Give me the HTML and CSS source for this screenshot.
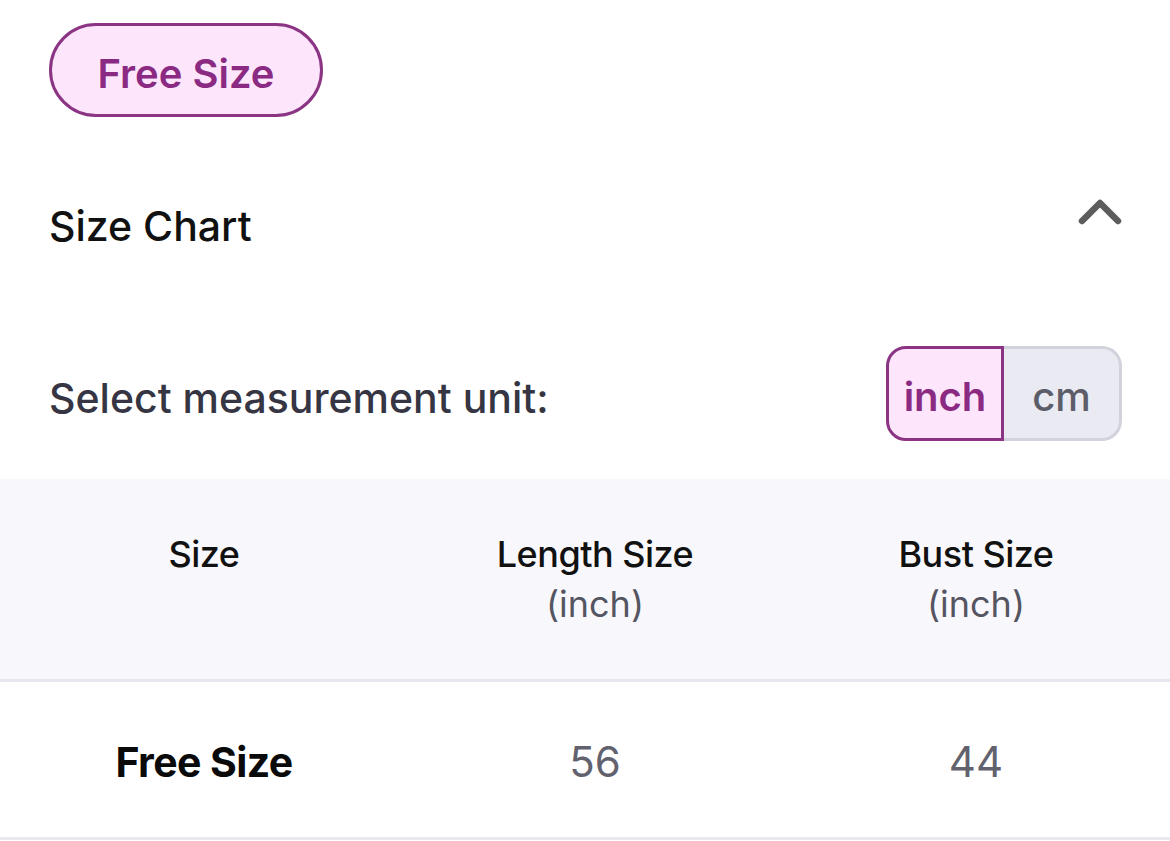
FILE: index.html
```html
<!DOCTYPE html>
<html lang="en">
<head>
<meta charset="utf-8">
<title>Size Chart</title>
<link rel="stylesheet" href="styles.css">
</head>
<body>
<div class="page">
  <section class="top">
    <button class="size-pill">Free Size</button>
    <div class="chart-head">
      <h2 class="chart-title">Size Chart</h2>
      <svg class="chevron" width="44" height="28" viewBox="0 0 44 28" aria-hidden="true">
        <path d="M4 24 L22 6 L40 24" fill="none" stroke="#5c5c5c" stroke-width="6.5" stroke-linecap="round" stroke-linejoin="round"/>
      </svg>
    </div>
    <div class="unit-row">
      <span class="unit-label">Select measurement unit:</span>
      <div class="unit-toggle">
        <span class="unit unit-active">inch</span>
        <span class="unit unit-idle">cm</span>
      </div>
    </div>
  </section>
  <div class="table">
    <div class="thead">
      <div class="th">Size</div>
      <div class="th">Length Size<span class="sub">(inch)</span></div>
      <div class="th">Bust Size<span class="sub">(inch)</span></div>
    </div>
    <div class="trow">
      <div class="td td-name">Free Size</div>
      <div class="td td-val">56</div>
      <div class="td td-val">44</div>
    </div>
  </div>
</div>
</body>
</html>
```
FILE: styles.css
```css
* { box-sizing: border-box; }
html, body { margin: 0; padding: 0; background: #ffffff; }
body {
  font-family: Inter, "Noto Sans", "Liberation Sans", sans-serif;
  color: #111111;
}
.page { width: 1170px; }
.top { padding: 23px 48px 0 49px; }

.size-pill {
  display: block;
  width: 274px;
  height: 94px;
  padding: 8px 0 0;
  border: 3px solid #8b3484;
  border-radius: 47px;
  background: #fde6fb;
  color: #8b2a82;
  font-family: inherit;
  font-size: 40px;
  font-weight: 600;
  letter-spacing: 0;
  line-height: 80px;
  text-align: center;
}

.chart-head {
  display: flex;
  justify-content: space-between;
  align-items: flex-start;
  margin-top: 85px;
}
.chart-title {
  margin: 0;
  font-size: 41px;
  font-weight: 500;
  line-height: 48px;
  letter-spacing: 0;
  color: #111111;
}
.chevron { margin-top: -5px; }

.unit-row {
  display: flex;
  justify-content: space-between;
  align-items: center;
  margin-top: 96px;
}
.unit-label {
  padding-top: 8px;
  font-size: 41px;
  font-weight: 500;
  line-height: 48px;
  letter-spacing: 0;
  color: #353543;
}
.unit-toggle {
  display: flex;
  height: 95px;
}
.unit {
  display: flex;
  align-items: center;
  justify-content: center;
  width: 118px;
  padding-top: 5px;
  font-size: 40px;
  font-weight: 600;
  border: 3px solid;
}
.unit-active {
  background: #fde6fb;
  border-color: #8b3484;
  color: #8b2a82;
  border-radius: 20px 0 0 20px;
}
.unit-idle {
  background: #eaeaf2;
  border-color: #d2d2dc;
  border-left: none;
  color: #5d5d6a;
  font-weight: 500;
  border-radius: 0 20px 20px 0;
}

.table { margin-top: 38px; }
.thead, .trow {
  display: grid;
  grid-template-columns: 408px 374px 1fr;
}
.thead {
  background: #f8f8fc;
  border-bottom: 3px solid #e6e6ee;
  padding: 50px 0 50px;
  height: 203px;
}
.th {
  display: flex;
  flex-direction: column;
  align-items: center;
  font-size: 36px;
  font-weight: 500;
  line-height: 50px;
  letter-spacing: -0.5px;
  color: #111111;
}
.sub {
  font-weight: 400;
  letter-spacing: 0;
  color: #555562;
}
.trow {
  height: 158px;
  border-bottom: 3px solid #e8e8ee;
  align-items: center;
}
.td {
  text-align: center;
  line-height: 48px;
  padding-top: 4px;
}
.td-name {
  font-size: 41px;
  font-weight: 700;
  letter-spacing: -0.6px;
  color: #0a0a0a;
}
.td-val {
  font-size: 42px;
  font-weight: 400;
  color: #62626e;
}
```
